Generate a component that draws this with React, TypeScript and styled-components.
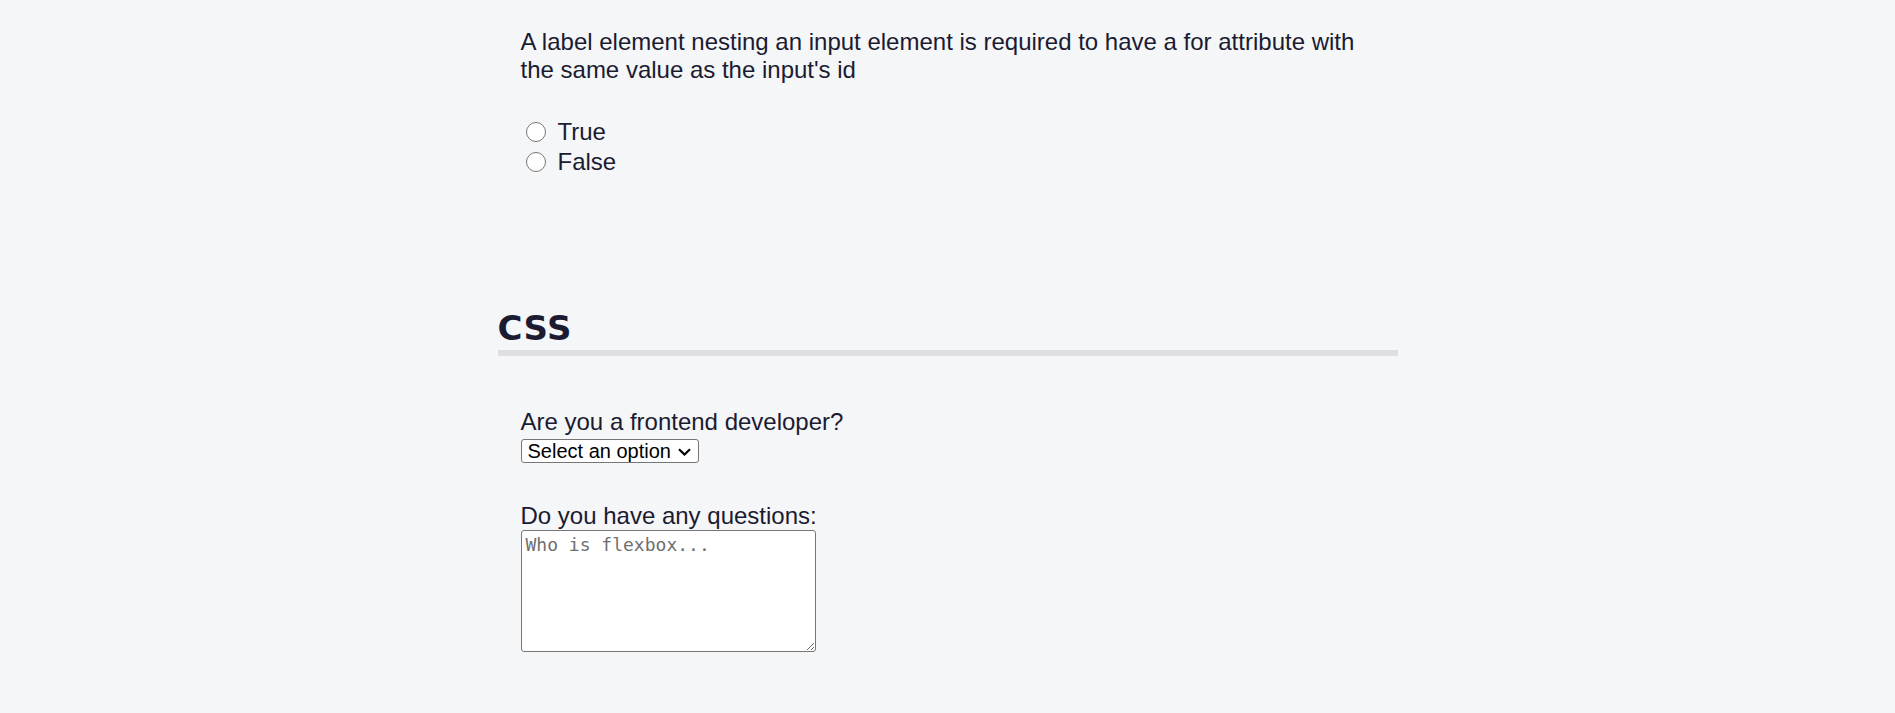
import React from "react";
import styled, { createGlobalStyle } from "styled-components";

const GlobalStyle = createGlobalStyle`
  html, body {
    margin: 0;
    padding: 0;
    background: #f5f6f7;
  }
  body {
    font-family: "Liberation Sans", Arial, sans-serif;
    color: #1b1b32;
    overflow: hidden;
  }
`;

const Main = styled.main`
  width: 900px;
  margin: 0 auto;
`;

const QuestionBlock = styled.div`
  padding: 28px 23px 0;
`;

const QuestionText = styled.p`
  margin: 0;
  font-size: 24px;
  line-height: 27.6px;
`;

const OptionList = styled.div`
  display: flex;
  flex-direction: column;
  margin-top: 33.5px;
`;

const OptionRow = styled.label`
  display: flex;
  align-items: center;
  gap: 12px;
  height: 30px;
  font-size: 24px;
  line-height: 30px;
`;

const Radio = styled.input`
  width: 20px;
  height: 20px;
  margin: 0 0 0 5px;
  accent-color: #1b1b32;
`;

const SectionTitle = styled.h2`
  margin: 131px 0 0;
  padding-bottom: 2px;
  font-family: Verdana, "DejaVu Sans", sans-serif;
  font-weight: 700;
  font-size: 34px;
  letter-spacing: 0.5px;
  line-height: 40px;
  color: #1b1b32;
  border-bottom: 6px solid #dfdfe2;
`;

const FormBlock = styled.div`
  display: flex;
  flex-direction: column;
  align-items: flex-start;
  padding: 52px 23px 0;
`;

const FieldLabel = styled.label<{ $gap?: number }>`
  display: block;
  margin-top: ${(p) => p.$gap ?? 0}px;
  font-size: 24px;
  line-height: 27.6px;
`;

const SelectWrap = styled.div`
  position: relative;
  margin-top: 3.5px;
`;

const Select = styled.select`
  appearance: none;
  box-sizing: border-box;
  width: 178px;
  height: 24px;
  margin: 0;
  padding: 0 0 0 6px;
  border: 1px solid #767676;
  border-radius: 3px;
  background: #ffffff;
  color: #000000;
  font-family: "Liberation Sans", Arial, sans-serif;
  font-size: 20px;
  line-height: 22px;
`;

const Chevron = styled.svg`
  position: absolute;
  left: 157px;
  top: 9px;
  pointer-events: none;
`;

const TextArea = styled.textarea`
  box-sizing: border-box;
  width: 295px;
  height: 122px;
  margin-top: 1px;
  padding: 3px 4px;
  border: 1px solid #767676;
  border-radius: 3px;
  background: #ffffff;
  font-family: "DejaVu Sans Mono", "Liberation Mono", monospace;
  font-size: 18px;
  line-height: 22px;
  color: #000;

  &::placeholder {
    color: #6f6f6f;
  }
`;

export default function App() {
  return (
    <>
      <GlobalStyle />
      <Main>
        <QuestionBlock>
          <QuestionText>
            A label element nesting an input element is required to have a for attribute with the
            same value as the input's id
          </QuestionText>
          <OptionList>
            <OptionRow>
              <Radio type="radio" name="q-label" value="true" />
              True
            </OptionRow>
            <OptionRow>
              <Radio type="radio" name="q-label" value="false" />
              False
            </OptionRow>
          </OptionList>
        </QuestionBlock>

        <SectionTitle>CSS</SectionTitle>

        <FormBlock>
          <FieldLabel htmlFor="frontend">Are you a frontend developer?</FieldLabel>
          <SelectWrap>
            <Select id="frontend" defaultValue="">
              <option value="">Select an option</option>
              <option value="yes">Yes</option>
              <option value="no">No</option>
            </Select>
            <Chevron width="13" height="8" viewBox="0 0 13 8">
              <path d="M1 1.2 L6.5 6.5 L12 1.2" fill="none" stroke="#000" strokeWidth="2.2" />
            </Chevron>
          </SelectWrap>
          <FieldLabel htmlFor="questions" $gap={39}>
            Do you have any questions:
          </FieldLabel>
          <TextArea id="questions" placeholder="Who is flexbox..." />
        </FormBlock>
      </Main>
    </>
  );
}
